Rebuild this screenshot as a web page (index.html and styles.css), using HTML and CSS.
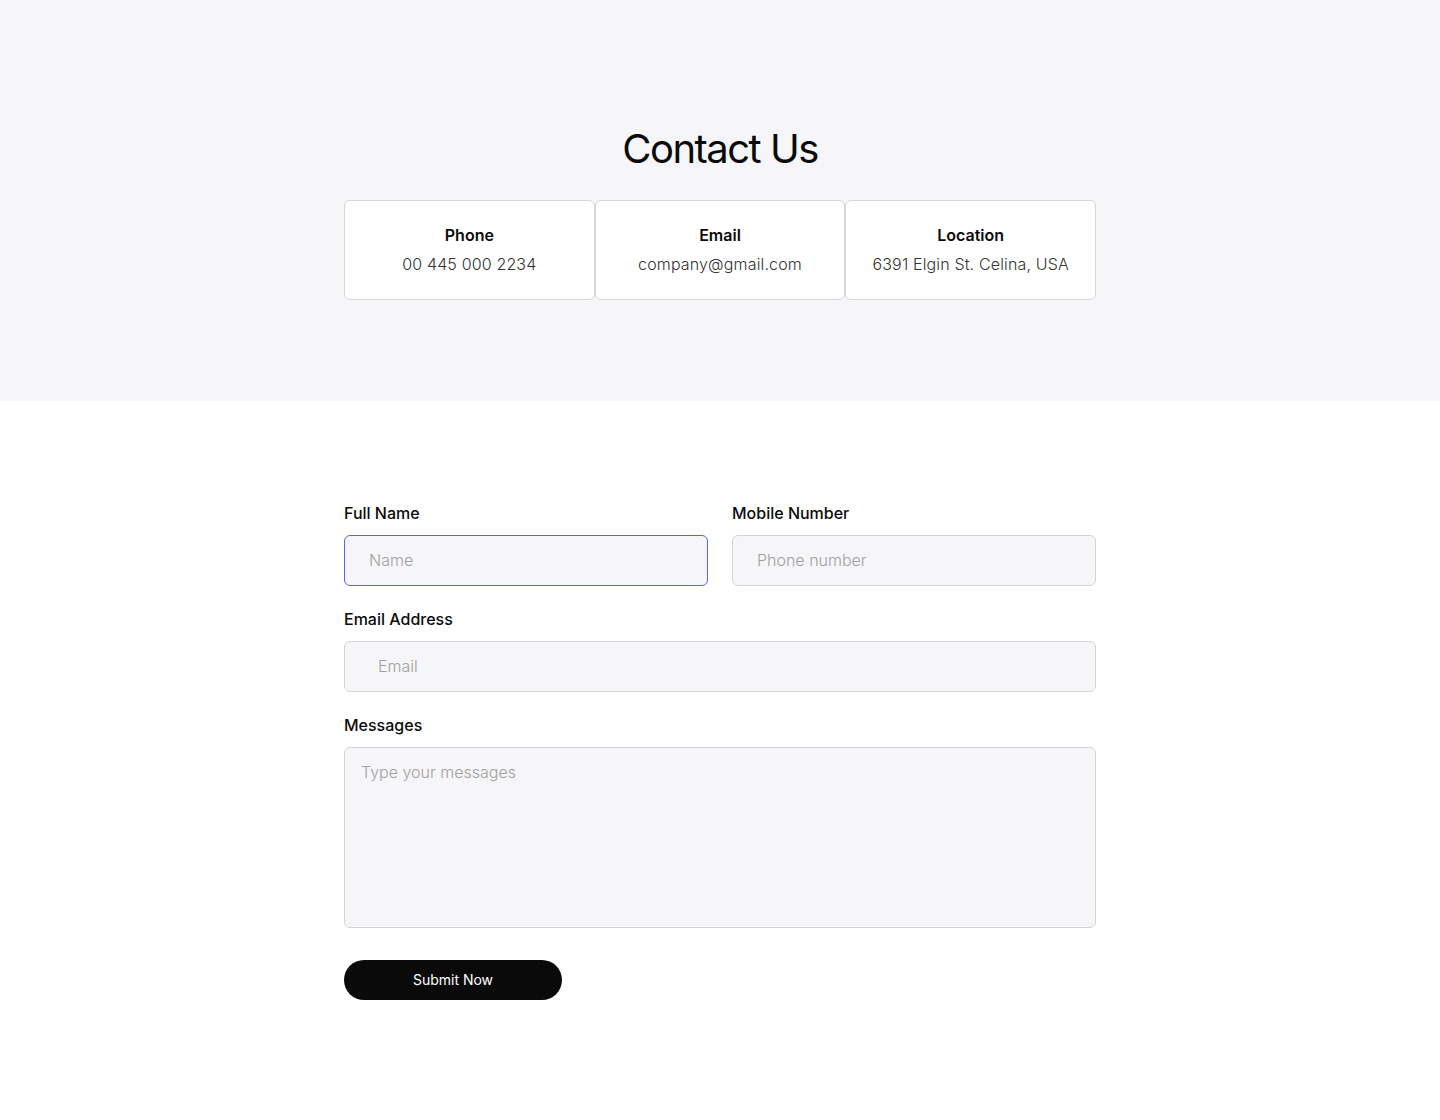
FILE: index.html
```html
<!DOCTYPE html>
<html lang="en">
<head>
<meta charset="utf-8">
<title>Contact Us</title>
<link rel="stylesheet" href="styles.css">
</head>
<body>
<section class="hero">
  <h1 class="title">Contact Us</h1>
  <div class="cards">
    <div class="card">
      <div class="card-title">Phone</div>
      <div class="card-value">00 445 000 2234</div>
    </div>
    <div class="card">
      <div class="card-title">Email</div>
      <div class="card-value">company@gmail.com</div>
    </div>
    <div class="card">
      <div class="card-title">Location</div>
      <div class="card-value">6391 Elgin St. Celina, USA</div>
    </div>
  </div>
</section>
<section class="form-section">
  <form class="form">
    <div class="row">
      <div class="field">
        <label class="label">Full Name</label>
        <input class="input input-focus" type="text" placeholder="Name">
      </div>
      <div class="field">
        <label class="label">Mobile Number</label>
        <input class="input" type="text" placeholder="Phone number">
      </div>
    </div>
    <div class="field">
      <label class="label">Email Address</label>
      <input class="input input-email" type="text" placeholder="Email">
    </div>
    <div class="field">
      <label class="label">Messages</label>
      <textarea class="textarea" placeholder="Type your messages"></textarea>
    </div>
    <button type="button" class="submit">Submit Now</button>
  </form>
</section>
</body>
</html>
```
FILE: styles.css
```css
* { box-sizing: border-box; }
html, body { margin: 0; padding: 0; }
body {
  font-family: Inter, "Noto Sans", Arial, sans-serif;
  color: #0a0a0a;
  background: #ffffff;
  width: 1440px;
  min-height: 1120px;
}
.hero {
  background: #f6f6f8;
  height: 401px;
  padding-top: 125px;
  display: flex;
  flex-direction: column;
  align-items: center;
}
.title {
  margin: 0 0 27px;
  font-size: 40px;
  line-height: 48px;
  font-weight: 400;
  letter-spacing: -1.5px;
  color: #0a0a0a;
}
.cards {
  width: 752px;
  display: grid;
  grid-template-columns: repeat(3, 1fr);
}
.card {
  background: #ffffff;
  border: 1px solid #d6d6d9;
  border-radius: 6px;
  height: 100px;
  padding-top: 23px;
  display: flex;
  flex-direction: column;
  align-items: center;
  gap: 6px;
}
.card-title {
  font-size: 16px;
  line-height: 22px;
  font-weight: 600;
  color: #0a0a0a;
}
.card-value {
  font-size: 16px;
  line-height: 24px;
  font-weight: 300;
  letter-spacing: 0.15px;
  color: #333333;
}
.form-section {
  padding-top: 100px;
  display: flex;
  justify-content: center;
}
.form {
  width: 752px;
  display: flex;
  flex-direction: column;
  gap: 21px;
}
.row {
  display: grid;
  grid-template-columns: 1fr 1fr;
  gap: 24px;
}
.field {
  display: flex;
  flex-direction: column;
  gap: 10px;
}
.label {
  font-size: 16px;
  line-height: 24px;
  font-weight: 500;
  color: #0a0a0a;
}
.input, .textarea {
  font-family: inherit;
  font-size: 16px;
  font-weight: 300;
  color: #0a0a0a;
  background: #f6f6f8;
  border: 1px solid #d4d4d8;
  border-radius: 6px;
  outline: none;
  width: 100%;
}
.input {
  height: 51px;
  padding: 0 24px 2px;
}
.input-focus {
  border-color: #5b63e6;
}
.input-email {
  padding-left: 33px;
}
.textarea {
  height: 181px;
  padding: 13px 16px;
  line-height: 22px;
  resize: none;
  display: block;
}
.input::placeholder, .textarea::placeholder {
  color: #a0a0a0;
  opacity: 1;
}
.submit {
  margin-top: 11px;
  width: 218px;
  height: 40px;
  padding: 0 0 2px;
  border: none;
  border-radius: 20px;
  background: #0a0a0a;
  color: #ffffff;
  font-family: inherit;
  font-size: 14px;
  font-weight: 400;
  cursor: pointer;
}
```
